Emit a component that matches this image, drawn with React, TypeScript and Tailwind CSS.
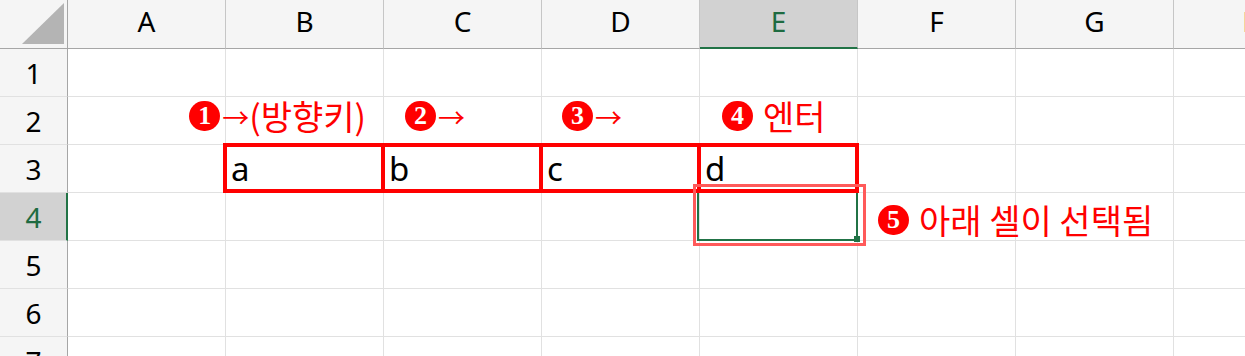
const COLS = ['A', 'B', 'C', 'D', 'E', 'F', 'G', 'H']
const ROWS = [1, 2, 3, 4, 5, 6, 7]

function Circ({ n, spaced }: { n: string; spaced?: boolean }) {
    return (
        <span
            className={`inline-flex h-[30px] w-[31px] shrink-0 items-center justify-center rounded-full bg-[#ff0000] pb-[1px] font-['Liberation_Serif',serif] text-[26px] font-bold leading-none text-white ${spaced ? 'mr-[10px]' : 'mr-[2px]'}`}
        >
            {n}
        </span>
    )
}

function Arrow() {
    return <span className="text-[27px] leading-none">→</span>
}

const note = "flex h-full items-center whitespace-nowrap font-['Noto_Sans_CJK_KR',sans-serif] text-[34px] leading-none text-[#ff0000]"
const value = "flex h-full items-center pl-[5px] font-['Noto_Sans','Noto_Sans_CJK_KR',sans-serif] text-[33px] text-black"

function cellContent(col: string, row: number) {
    const key = col + row
    switch (key) {
        case 'B2':
            return <div className={note + ' justify-end pr-[17px] pb-[9px]'}><Circ n="1" /><Arrow />(방향키)</div>
        case 'C2':
            return <div className={note + ' pl-[21px] pb-[9px]'}><Circ n="2" /><Arrow /></div>
        case 'D2':
            return <div className={note + ' pl-[20px] pb-[9px]'}><Circ n="3" /><Arrow /></div>
        case 'E2':
            return <div className={note + ' pl-[22px] pb-[9px]'}><Circ n="4" spaced />엔터</div>
        case 'F4':
            return <div className={note + ' pl-[20px] pt-[7px]'}><Circ n="5" spaced />아래 셀이 선택됨</div>
        case 'B3':
            return <div className={value}>a</div>
        case 'C3':
            return <div className={value}>b</div>
        case 'D3':
            return <div className={value}>c</div>
        case 'E3':
            return <div className={value}>d</div>
    }
    return null
}

export default function App() {
    const header = "font-['Noto_Sans',sans-serif] text-[28px]"

    return (
        <div className="relative h-[356px] w-[1245px] overflow-hidden bg-white">
            <div className="grid grid-cols-[68px_repeat(8,158px)] grid-rows-[49px_repeat(7,48px)]">
                {/* corner */}
                <div className="relative border-r border-b border-r-[#a6a6a6] border-b-[#a6a6a6] bg-[#f5f5f5]">
                    <svg className="absolute left-0 top-0" width="67" height="48" viewBox="0 0 67 48">
                        <polygon points="22,44 64,44 64,3" fill="#b4b4b4" />
                    </svg>
                </div>
                {COLS.map(c => (
                    <div
                        key={c}
                        className={
                            c === 'E'
                                ? `flex items-center justify-center border-r border-b-2 border-r-[#c6c6c6] border-b-[#217346] bg-[#d2d2d2] pb-[5px] text-[#1e6b41] ${header}`
                                : `flex items-center justify-center border-r border-b border-r-[#c6c6c6] border-b-[#a6a6a6] bg-[#f5f5f5] pb-[6px] text-black ${header}`
                        }
                    >
                        {c}
                    </div>
                ))}
                {ROWS.map(r => [
                    <div
                        key={'h' + r}
                        className={
                            r === 4
                                ? `flex items-center justify-center border-r-2 border-b border-r-[#217346] border-b-[#e1e1e1] bg-[#d2d2d2] pl-[1px] text-[#1e6b41] ${header}`
                                : `flex items-center justify-center border-r border-b border-r-[#a6a6a6] border-b-[#e1e1e1] bg-[#f5f5f5] text-black ${header}`
                        }
                    >
                        {r}
                    </div>,
                    ...COLS.map(c => (
                        <div key={c + r} className="border-r border-b border-[#e1e1e1]">
                            {cellContent(c, r)}
                        </div>
                    )),
                ])}
            </div>

            {/* active cell E4 */}
            <div className="absolute left-[697px] top-[191px] h-[50px] w-[161px] border-2 border-[#217346]" />
            <div className="absolute left-[854px] top-[236px] h-[6px] w-[6px] bg-[#217346]" />

            {/* red boxes around B3:E3 */}
            <div className="absolute left-[223px] top-[143px] h-[50px] w-[162px] border-4 border-[#ff0000]" />
            <div className="absolute left-[381px] top-[143px] h-[50px] w-[162px] border-4 border-[#ff0000]" />
            <div className="absolute left-[539px] top-[143px] h-[50px] w-[162px] border-4 border-[#ff0000]" />
            <div className="absolute left-[697px] top-[143px] h-[50px] w-[162px] border-4 border-[#ff0000]" />

            {/* highlight around E4 */}
            <div className="absolute left-[693px] top-[184px] h-[62px] w-[173px] border-[3px] border-[#ff5a5a]" />
        </div>
    )
}
